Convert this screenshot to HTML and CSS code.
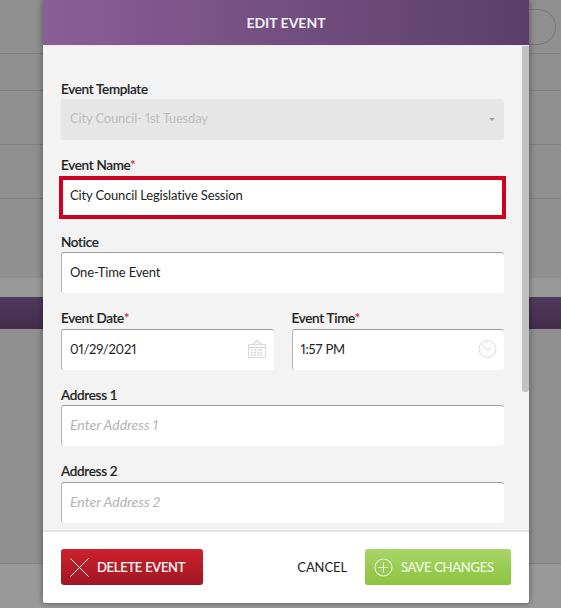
FILE: index.html
```html
<!DOCTYPE html>
<html lang="en">
<head>
    <meta charset="UTF-8">
    <title>Edit Event</title>
    <link rel="stylesheet" href="styles.css">
</head>
<body>
    <div class="backdrop">
        <div class="bg-row row-1"><span class="bg-pill"></span></div>
        <div class="bg-row row-2"></div>
        <div class="bg-row row-3"></div>
        <div class="bg-row row-4"></div>
        <div class="bg-row row-5"></div>
        <div class="bg-strip"></div>
        <div class="bg-band"></div>
        <div class="bg-row row-6"></div>
        <div class="bg-foot"></div>
    </div>
    <div class="modal">
        <div class="modal-header">EDIT EVENT</div>
        <div class="modal-body">
            <div class="scrollbar"></div>
            <div class="field">
                <label class="field-label">Event Template</label>
                <div class="select-box">
                    <span>City Council- 1st Tuesday</span>
                    <span class="caret"></span>
                </div>
            </div>
            <div class="field">
                <label class="field-label">Event Name<span class="req">*</span></label>
                <input class="text-input error" type="text" value="City Council Legislative Session">
            </div>
            <div class="field">
                <label class="field-label">Notice</label>
                <input class="text-input" type="text" value="One-Time Event">
            </div>
            <div class="field-row">
                <div class="field">
                    <label class="field-label">Event Date<span class="req">*</span></label>
                    <div class="icon-input">
                        <input class="text-input" type="text" value="01/29/2021">
                        <svg class="input-icon" width="20" height="20" viewBox="0 0 20 20" fill="none" stroke="#dadada">
                            <path d="M1.5 5.5h17v13h-17z"/>
                            <path d="M6 5.5 10 1.5l4 4" stroke-width="1.4"/>
                            <path d="M1.5 8.5h17" stroke-width="1.5"/>
                            <path d="M4 11h12M4 13.5h12M4 16h12" stroke-width="1.4" stroke-dasharray="2 1"/>
                        </svg>
                    </div>
                </div>
                <div class="field">
                    <label class="field-label">Event Time<span class="req">*</span></label>
                    <div class="icon-input">
                        <input class="text-input" type="text" value="1:57 PM">
                        <svg class="input-icon" width="20" height="20" viewBox="0 0 20 20" fill="none" stroke="#dcdcdc">
                            <circle cx="10.500" cy="10" r="8.500"/>
                            <path d="M5.500 6.500 10.500 10.500l4-1.500" stroke="#d4d4d4"/>
                            <path d="M10.500 3v1M10.500 16v1M3.500 10h1M16.500 10h1M5.500 5l.7.7M15.500 5l-.7.7M5.500 15l.7-.7M15.500 15l-.7-.7"/>
                        </svg>
                    </div>
                </div>
            </div>
            <div class="field">
                <label class="field-label">Address 1</label>
                <input class="text-input" type="text" placeholder="Enter Address 1">
            </div>
            <div class="field">
                <label class="field-label">Address 2</label>
                <input class="text-input" type="text" placeholder="Enter Address 2">
            </div>
        </div>
        <div class="modal-footer">
            <button class="btn btn-delete">
                <svg width="19" height="19" viewBox="0 0 19 19" stroke="#fff" stroke-width="1" fill="none"><path d="M.5.5l18 18M18.500.5l-18 18"/></svg>
                DELETE EVENT
            </button>
            <div class="footer-right">
                <button class="btn-cancel">CANCEL</button>
                <button class="btn btn-save">
                    <svg width="19" height="19" viewBox="0 0 19 19" stroke="#e6f3d2" stroke-width="1.100" fill="none"><circle cx="9.500" cy="9.500" r="8.500"/><path d="M9.500 4.500v10M4.500 9.500h10"/></svg>
                    SAVE CHANGES
                </button>
            </div>
        </div>
    </div>
</body>
</html>
```

FILE: styles.css
```css
* {
    box-sizing: border-box;
}
html, body {
    margin: 0;
    padding: 0;
    height: 100%;
    overflow: hidden;
}
body {
    background: #8f8f8f;
    font-family: Lato, "Open Sans", sans-serif;
    color: #222;
    position: relative;
}
.backdrop {
    height: 608px;
    display: flex;
    flex-direction: column;
}
.bg-row {
    border-bottom: 1px solid #7f7f7f;
}
.row-1 {
    height: 54px;
    position: relative;
}
.bg-pill {
    position: absolute;
    right: 5px;
    top: 9px;
    width: 60px;
    height: 36px;
    border: 1px solid #767676;
    border-radius: 18px;
}
.row-2 {
    height: 37px;
}
.row-3 {
    height: 54px;
}
.row-4 {
    height: 54px;
}
.row-5 {
    height: 79px;
    border-bottom: none;
}
.bg-strip {
    height: 19px;
    background: #999;
}
.bg-band {
    height: 32px;
    background: linear-gradient(#503a5e, #432c4b);
}
.row-6 {
    height: 235px;
}
.bg-foot {
    flex: 1;
    background: #999;
}
.modal {
    position: absolute;
    left: 43px;
    top: 0;
    width: 486px;
    height: 603px;
    background: #f3f3f3;
    display: flex;
    flex-direction: column;
    border-radius: 0 0 3px 3px;
    box-shadow: 0 0 6px rgba(0, 0, 0, 0.45);
    overflow: hidden;
}
.modal-header {
    height: 45px;
    flex-shrink: 0;
    background: linear-gradient(90deg, #8a5e97, #5c3f68);
    color: #f4f0f5;
    font-size: 14px;
    font-weight: 700;
    text-align: center;
    line-height: 46px;
}
.modal-body {
    flex: 1;
    position: relative;
    overflow: hidden;
    padding: 33.5px 25px 0 18px;
    border-top: 1px solid #ececec;
}
.scrollbar {
    position: absolute;
    right: 0;
    top: 0;
    width: 7px;
    height: 346px;
    background: #c1c1c1;
    border-radius: 0 0 3px 3px;
}
.field {
    margin-bottom: 16px;
    min-width: 0;
}
.field-row {
    display: flex;
    gap: 18px;
}
.field-row .field {
    flex: 1;
}
.field-label {
    display: block;
    font-size: 13.5px;
    font-weight: 500;
    line-height: 19px;
    margin-bottom: 0.5px;
    letter-spacing: -0.3px;
    color: #222;
    -webkit-text-stroke: 0.2px #222;
}
.req {
    color: #c8102e;
    -webkit-text-stroke: 0;
}
.select-box {
    height: 41px;
    background: #e6e6e6;
    border-radius: 3px;
    padding: 0 9px 4px;
    display: flex;
    align-items: center;
    justify-content: space-between;
    font-size: 13px;
    letter-spacing: -0.16px;
    font-variant-numeric: proportional-nums;
    color: #bdbdbd;
}
.caret {
    width: 0;
    height: 0;
    margin-top: 3px;
    border-left: 3px solid transparent;
    border-right: 3px solid transparent;
    border-top: 3px solid #a5a5a5;
}
.text-input {
    display: block;
    width: 100%;
    height: 41px;
    border: none;
    border-top: 1px solid #9c9c9c;
    border-left: 1px solid #b5b5b5;
    border-radius: 3px;
    background: #fff;
    padding: 0 8px 2px;
    font-family: inherit;
    font-size: 13px;
    letter-spacing: -0.16px;
    font-variant-numeric: proportional-nums;
    color: #222;
    outline: none;
}
.text-input::placeholder {
    color: #b3b3b3;
    font-style: italic;
    font-size: 14px;
    letter-spacing: 0;
    opacity: 1;
}
.text-input.error {
    width: calc(100% + 4px);
    height: 43px;
    margin: 0 -2px -2px;
    border: 4px solid #cf0022;
    border-radius: 0;
    padding: 0 7px 4px;
}
.icon-input {
    position: relative;
}
.input-icon {
    position: absolute;
    right: 7px;
    top: 10px;
}
.modal-footer {
    height: 73px;
    flex-shrink: 0;
    background: #fff;
    border-top: 2px solid #e3e3e3;
    padding: 17px 18px 0;
    display: flex;
    justify-content: space-between;
    align-items: flex-start;
}
.footer-right {
    display: flex;
    align-items: center;
    gap: 18px;
}
.btn {
    height: 36px;
    border: none;
    border-radius: 3px;
    color: #fff;
    font-family: inherit;
    font-size: 13px;
    letter-spacing: -0.28px;
    display: flex;
    align-items: center;
    gap: 8px;
    padding: 0 9px;
    -webkit-text-stroke: 0.2px #fff;
}
.btn-delete {
    width: 142px;
    background: linear-gradient(#cd202e, #a01722);
}
.btn-save {
    width: 146px;
    background: linear-gradient(#a7d569, #8cc33e);
    color: #eef7e0;
    -webkit-text-stroke: 0.2px #eef7e0;
}
.btn-cancel {
    border: none;
    background: none;
    padding: 0 0 0 1px;
    font-family: inherit;
    font-size: 13px;
    letter-spacing: -0.1px;
    color: #222;
}
```
